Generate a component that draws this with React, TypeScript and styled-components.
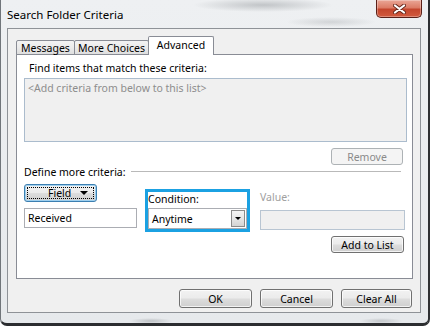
import React from "react";
import styled, { createGlobalStyle } from "styled-components";

const uiFont = `"Noto Sans", "Open Sans", sans-serif`;
const textSize = "10.5px";

const GlobalStyle = createGlobalStyle`
  html, body {
    margin: 0;
    padding: 0;
    background: #ffffff;
  }
  body {
    font-family: ${uiFont};
    font-size: ${textSize};
    color: #000000;
  }
`;

const Window = styled.div`
  width: 430px;
  height: 326px;
  box-sizing: border-box;
  display: flex;
  flex-direction: column;
  border-left: 1px solid #70757a;
  border-right: 2px solid #2e3033;
  border-bottom: 3px solid #2b2d30;
  border-radius: 0 0 7px 7px;
  overflow: hidden;
  background:
    radial-gradient(ellipse 70px 7px at 262px 5px, rgba(110, 115, 120, 0.35), transparent),
    radial-gradient(ellipse 45px 5px at 330px 22px, rgba(110, 115, 120, 0.22), transparent),
    radial-gradient(ellipse 22px 3px at 150px 321px, rgba(110, 115, 120, 0.35), transparent),
    radial-gradient(ellipse 22px 3px at 380px 321px, rgba(110, 115, 120, 0.3), transparent),
    linear-gradient(180deg, #eef0f2 0%, #e6e9ec 100%);
`;

const TitleBar = styled.div`
  height: 28px;
  flex-shrink: 0;
  display: flex;
  justify-content: space-between;
  align-items: flex-start;
  padding: 0 6px;
`;

const Title = styled.div`
  font-size: 11.5px;
  line-height: 14px;
  padding-top: 8px;
  white-space: nowrap;
`;

const CloseButton = styled.div`
  width: 46px;
  height: 18px;
  box-sizing: border-box;
  border: 1px solid #5b2018;
  border-top: none;
  border-radius: 0 0 5px 5px;
  background: linear-gradient(180deg, #eaa696 0%, #dc7c66 45%, #c4462d 55%, #d25a3e 100%);
  box-shadow: inset 0 0 0 1px rgba(255, 255, 255, 0.3);
  display: flex;
  align-items: center;
  justify-content: center;
`;

const Frame = styled.div`
  flex: 1;
  display: flex;
  padding: 0 7px 10px 6px;
`;

const Client = styled.div`
  flex: 1;
  box-sizing: border-box;
  border: 1px solid #8e9297;
  background: #f0f0f0;
  padding: 7px 7px 0 8px;
  display: flex;
  flex-direction: column;
`;

const TabStrip = styled.div`
  display: flex;
  align-items: flex-end;
  height: 19px;
  position: relative;
  z-index: 1;
`;

const Tab = styled.div<{ $active?: boolean; $width: number }>`
  width: ${(p) => p.$width}px;
  height: ${(p) => (p.$active ? 19 : 15)}px;
  box-sizing: border-box;
  margin-left: -1px;
  border: 1px solid #898c95;
  border-bottom: ${(p) => (p.$active ? "none" : "1px solid #898c95")};
  border-radius: 2px 2px 0 0;
  background: ${(p) =>
    p.$active ? "#ffffff" : "linear-gradient(180deg, #f3f3f3 0%, #ebebeb 50%, #dedede 100%)"};
  text-align: center;
  white-space: nowrap;
  font-size: ${textSize};
  line-height: ${(p) => (p.$active ? 16 : 14)}px;
  &:first-child {
    margin-left: 0;
  }
`;

const Panel = styled.div`
  height: 225px;
  box-sizing: border-box;
  margin-top: -1px;
  border: 1px solid #898c95;
  background: #ffffff;
  padding: 0 5px 0 7px;
  display: flex;
  flex-direction: column;
`;

const Label = styled.div<{ $muted?: boolean }>`
  line-height: 14px;
  font-size: ${textSize};
  color: ${(p) => (p.$muted ? "#a0a0a0" : "#000000")};
  white-space: nowrap;
`;

const FindLabel = styled(Label)`
  margin-top: 6px;
  padding-left: 5px;
`;

const ListBox = styled.div`
  margin-top: 3px;
  height: 64px;
  box-sizing: border-box;
  border: 1px solid #abbccd;
  background: #f0f0f0;
  padding: 2px 3px;
  color: #8d8d8d;
  font-size: ${textSize};
  line-height: 14px;
`;

const ButtonRow = styled.div<{ $gap?: number; $right: number; $top: number }>`
  display: flex;
  justify-content: flex-end;
  gap: ${(p) => p.$gap ?? 0}px;
  margin-top: ${(p) => p.$top}px;
  padding-right: ${(p) => p.$right}px;
`;

const Button = styled.button<{ $width: number; $height: number }>`
  width: ${(p) => p.$width}px;
  height: ${(p) => p.$height}px;
  box-sizing: border-box;
  padding: 0;
  border: 1px solid #707070;
  border-radius: 3px;
  background: linear-gradient(180deg, #f2f2f2 0%, #ebebeb 48%, #dddddd 52%, #cfcfcf 100%);
  box-shadow: inset 0 0 0 1px rgba(255, 255, 255, 0.75);
  font-family: ${uiFont};
  font-size: ${textSize};
  color: #000000;
  &:disabled {
    border-color: #adb2b5;
    background: #f4f4f4;
    box-shadow: none;
    color: #8a8a8a;
  }
`;

const DefineRow = styled.div`
  display: flex;
  align-items: center;
  gap: 5px;
  padding-right: 6px;
`;

const Rule = styled.div`
  flex: 1;
  height: 0;
  border-top: 1px solid #b9b9b9;
  border-bottom: 1px solid #ffffff;
`;

const CriteriaRow = styled.div`
  display: flex;
  align-items: flex-start;
  margin-top: 5px;
`;

const Column = styled.div<{ $width: number; $top?: number; $left?: number }>`
  width: ${(p) => p.$width}px;
  margin-top: ${(p) => p.$top ?? 0}px;
  margin-left: ${(p) => p.$left ?? 0}px;
  display: flex;
  flex-direction: column;
`;

const FieldButton = styled.button`
  width: 73px;
  height: 18px;
  box-sizing: border-box;
  padding: 2px;
  border: 1px solid #3c7fb1;
  border-radius: 3px;
  background: linear-gradient(180deg, #f2f2f2 0%, #ebebeb 48%, #dddddd 52%, #cfcfcf 100%);
  box-shadow: inset 0 0 0 1px #9fd0ef;
  font-family: ${uiFont};
  font-size: ${textSize};
  color: #000000;
`;

const FocusRing = styled.span`
  display: flex;
  align-items: center;
  justify-content: space-between;
  height: 100%;
  box-sizing: border-box;
  border: 1px dotted #000000;
  padding: 0 5px 0 20px;
`;

const TextBox = styled.input<{ $disabled?: boolean }>`
  height: 20px;
  box-sizing: border-box;
  margin: 6px 0 0;
  padding: 0 3px;
  border: 1px solid ${(p) => (p.$disabled ? "#b8c5d2" : "#abadb3")};
  background: ${(p) => (p.$disabled ? "#f0f0f0" : "#ffffff")};
  font-family: ${uiFont};
  font-size: ${textSize};
  color: #000000;
  outline: none;
`;

const Highlight = styled.div`
  width: 105px;
  box-sizing: border-box;
  margin: 5px 0 0 8px;
  border: 3px solid #1ba1e2;
  background: #ffffff;
  display: flex;
  flex-direction: column;
`;

const ConditionLabel = styled(Label)`
  height: 16px;
`;

const Select = styled.div`
  height: 21px;
  box-sizing: border-box;
  border: 1px solid #abadb3;
  padding: 0 1px 0 3px;
  display: flex;
  align-items: center;
  justify-content: space-between;
  font-size: ${textSize};
`;

const DropArrow = styled.div`
  width: 14px;
  height: 17px;
  box-sizing: border-box;
  border: 1px solid #8b8b8b;
  background: linear-gradient(180deg, #f4f4f4 0%, #e6e6e6 50%, #d4d4d4 100%);
  display: flex;
  align-items: center;
  justify-content: center;
`;

const Triangle = styled.span<{ $size: number }>`
  width: 0;
  height: 0;
  border-left: ${(p) => p.$size}px solid transparent;
  border-right: ${(p) => p.$size}px solid transparent;
  border-top: ${(p) => p.$size}px solid #000000;
`;

const App: React.FC = () => {
  return (
    <>
      <GlobalStyle />
      <Window>
        <TitleBar>
          <Title>Search Folder Criteria</Title>
          <CloseButton>
            <svg width="13" height="10" viewBox="0 0 13 10">
              <path d="M2 1.5 L11 8.5 M11 1.5 L2 8.5" stroke="#6a2a1e" strokeWidth="4" strokeLinecap="round" />
              <path d="M2 1.5 L11 8.5 M11 1.5 L2 8.5" stroke="#ffffff" strokeWidth="2.2" strokeLinecap="round" />
            </svg>
          </CloseButton>
        </TitleBar>
        <Frame>
          <Client>
            <TabStrip>
              <Tab $width={59}>Messages</Tab>
              <Tab $width={75}>More Choices</Tab>
              <Tab $width={66} $active>
                Advanced
              </Tab>
            </TabStrip>
            <Panel>
              <FindLabel>Find items that match these criteria:</FindLabel>
              <ListBox>&lt;Add criteria from below to this list&gt;</ListBox>
              <ButtonRow $top={6} $right={4}>
                <Button $width={72} $height={17} disabled>
                  Remove
                </Button>
              </ButtonRow>
              <DefineRow>
                <Label>Define more criteria:</Label>
                <Rule />
              </DefineRow>
              <CriteriaRow>
                <Column $width={113}>
                  <FieldButton>
                    <FocusRing>
                      Field
                      <Triangle $size={4} />
                    </FocusRing>
                  </FieldButton>
                  <TextBox defaultValue="Received" readOnly />
                </Column>
                <Highlight>
                  <ConditionLabel>Condition:</ConditionLabel>
                  <Select>
                    Anytime
                    <DropArrow>
                      <Triangle $size={3} />
                    </DropArrow>
                  </Select>
                </Highlight>
                <Column $width={145} $top={6} $left={10}>
                  <Label $muted>Value:</Label>
                  <TextBox $disabled readOnly />
                </Column>
              </CriteriaRow>
              <ButtonRow $top={4} $right={3}>
                <Button $width={73} $height={17}>
                  Add to List
                </Button>
              </ButtonRow>
            </Panel>
            <ButtonRow $top={10} $right={1} $gap={8}>
              <Button $width={73} $height={19}>
                OK
              </Button>
              <Button $width={73} $height={19}>
                Cancel
              </Button>
              <Button $width={71} $height={19}>
                Clear All
              </Button>
            </ButtonRow>
          </Client>
        </Frame>
      </Window>
    </>
  );
};

export default App;
